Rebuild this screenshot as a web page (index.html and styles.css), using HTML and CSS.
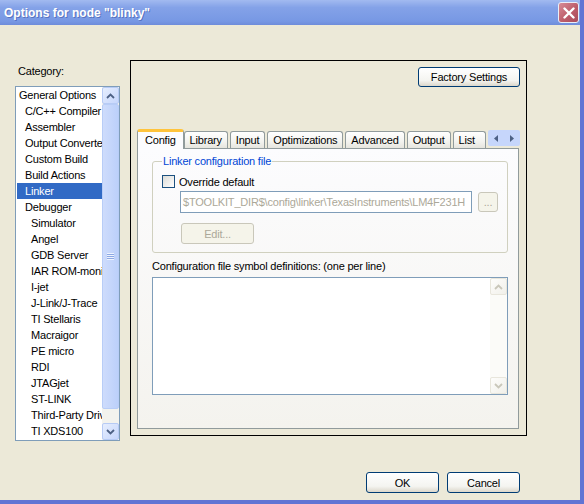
FILE: index.html
```html
<!DOCTYPE html>
<html lang="en">
<head>
    <meta charset="UTF-8">
    <title>Options for node "blinky"</title>
    <link rel="stylesheet" href="styles.css">
</head>
<body>
    <div class="window">
        <div class="titlebar">
            <span class="title">Options for node "blinky"</span>
            <span class="close-btn">
                <svg width="12" height="12" viewBox="0 0 12 12"><path d="M1.5 1.5 L10.5 10.5 M10.5 1.5 L1.5 10.5" stroke="#fff" stroke-width="2.4" stroke-linecap="round"/></svg>
            </span>
        </div>

        <div class="client">
            <div class="main">
                <div class="sidebar">
                    <div class="cat-label">Category:</div>
                    <div class="listbox">
                        <ul class="cat-list">
                            <li>General Options</li>
                            <li class="lvl1">C/C++ Compiler</li>
                            <li class="lvl1">Assembler</li>
                            <li class="lvl1">Output Converter</li>
                            <li class="lvl1">Custom Build</li>
                            <li class="lvl1">Build Actions</li>
                            <li class="lvl1 selected">Linker</li>
                            <li class="lvl1">Debugger</li>
                            <li class="lvl2">Simulator</li>
                            <li class="lvl2">Angel</li>
                            <li class="lvl2">GDB Server</li>
                            <li class="lvl2">IAR ROM-monitor</li>
                            <li class="lvl2">I-jet</li>
                            <li class="lvl2">J-Link/J-Trace</li>
                            <li class="lvl2">TI Stellaris</li>
                            <li class="lvl2">Macraigor</li>
                            <li class="lvl2">PE micro</li>
                            <li class="lvl2">RDI</li>
                            <li class="lvl2">JTAGjet</li>
                            <li class="lvl2">ST-LINK</li>
                            <li class="lvl2">Third-Party Driver</li>
                            <li class="lvl2">TI XDS100</li>
                        </ul>
                        <div class="vscroll">
                            <span class="sb-btn">
                                <svg width="9" height="6" viewBox="0 0 9 6"><path d="M1 5 L4.5 1.5 L8 5" fill="none" stroke="#4D6185" stroke-width="1.8"/></svg>
                            </span>
                            <span class="sb-thumb"><span class="grip"></span></span>
                            <span class="sb-track"></span>
                            <span class="sb-btn">
                                <svg width="9" height="6" viewBox="0 0 9 6"><path d="M1 1 L4.5 4.5 L8 1" fill="none" stroke="#4D6185" stroke-width="1.8"/></svg>
                            </span>
                        </div>
                    </div>
                </div>

                <div class="panel">
                    <div class="panel-top">
                        <button class="xp-btn factory-btn">Factory Settings</button>
                    </div>

                    <div class="tabs">
                        <span class="tab active">Config</span>
                        <span class="tab">Library</span>
                        <span class="tab">Input</span>
                        <span class="tab">Optimizations</span>
                        <span class="tab">Advanced</span>
                        <span class="tab">Output</span>
                        <span class="tab tab-last">List</span>
                        <span class="tab-arrows">
                            <span class="tab-arrow"><svg width="4" height="7" viewBox="0 0 4 7"><path d="M4 0 L0 3.5 L4 7 Z" fill="#4D6185"/></svg></span>
                            <span class="tab-arrow"><svg width="4" height="7" viewBox="0 0 4 7"><path d="M0 0 L4 3.5 L0 7 Z" fill="#4D6185"/></svg></span>
                        </span>
                    </div>

                    <div class="tab-page">
                        <fieldset class="group">
                            <legend>Linker configuration file</legend>
                            <div class="check-row">
                                <span class="checkbox"></span>
                                <span>Override default</span>
                            </div>
                            <div class="path-row">
                                <span class="textbox disabled">$TOOLKIT_DIR$\config\linker\TexasInstruments\LM4F231H</span>
                                <button class="xp-btn disabled browse-btn">...</button>
                            </div>
                            <div class="edit-row">
                                <button class="xp-btn disabled edit-btn">Edit...</button>
                            </div>
                        </fieldset>

                        <div class="defs-label">Configuration file symbol definitions: (one per line)</div>
                        <div class="defs-box">
                            <div class="defs-text"></div>
                            <div class="vscroll off">
                                <span class="sb-btn">
                                    <svg width="9" height="6" viewBox="0 0 9 6"><path d="M1 5 L4.5 1.5 L8 5" fill="none" stroke="#C9C7BA" stroke-width="1.8"/></svg>
                                </span>
                                <span class="sb-track"></span>
                                <span class="sb-btn">
                                    <svg width="9" height="6" viewBox="0 0 9 6"><path d="M1 1 L4.5 4.5 L8 1" fill="none" stroke="#C9C7BA" stroke-width="1.8"/></svg>
                                </span>
                            </div>
                        </div>
                    </div>
                </div>
            </div>

            <div class="footer">
                <button class="xp-btn dlg-btn">OK</button>
                <button class="xp-btn dlg-btn">Cancel</button>
            </div>
        </div>
    </div>
</body>
</html>
```

FILE: styles.css
```css
body {
    margin: 0;
    background-color: #ECE9D8;
    font-family: 'Liberation Sans', Arial, sans-serif;
    font-size: 11px;
    letter-spacing: -0.2px;
    color: #000;
}

.window {
    width: 584px;
    height: 504px;
    box-sizing: border-box;
    display: flex;
    flex-direction: column;
    background-color: #ECE9D8;
    border-right: 4px solid #6174D4;
    border-bottom: 4px solid #6174D4;
}

/* title bar */
.titlebar {
    height: 25px;
    flex: none;
    display: flex;
    align-items: center;
    justify-content: space-between;
    padding: 0 1px 0 4px;
    background: linear-gradient(#A2BAF0, #84A2E8 30%, #7798E4 85%, #6E8CDA);
}

.title {
    color: #fff;
    font-weight: bold;
    font-size: 12px;
    letter-spacing: 0;
    text-shadow: 1px 1px 0 rgba(30, 50, 130, 0.4);
}

.close-btn {
    width: 21px;
    height: 21px;
    box-sizing: border-box;
    border: 1px solid #E9EEF8;
    border-radius: 3px;
    background: linear-gradient(135deg, #D88C96, #BB5A68 60%, #A84C5B);
    display: flex;
    align-items: center;
    justify-content: center;
}

/* client area */
.client {
    flex: 1;
    display: flex;
    flex-direction: column;
    padding: 35px 0 0 15px;
}

.main {
    display: flex;
    gap: 10px;
}

.sidebar {
    width: 105px;
    padding-top: 5px;
}

.cat-label {
    line-height: 13px;
    margin-bottom: 8px;
    padding-left: 3px;
}

.listbox {
    height: 355px;
    box-sizing: border-box;
    border: 1px solid #7F9DB9;
    background-color: #fff;
    display: flex;
}

.cat-list {
    list-style: none;
    margin: 0;
    padding: 0;
    width: 86px;
    overflow: hidden;
}

.cat-list li {
    height: 16px;
    line-height: 16px;
    padding-left: 3px;
    white-space: nowrap;
}

.cat-list li.lvl1 {
    padding-left: 9px;
}

.cat-list li.lvl2 {
    padding-left: 15px;
}

.cat-list li.selected {
    background-color: #316AC5;
    color: #fff;
    margin-left: 1px;
    padding-left: 8px;
}

/* scrollbars */
.vscroll {
    width: 17px;
    flex: none;
    display: flex;
    flex-direction: column;
    background-color: #F3F3EE;
}

.sb-btn {
    height: 17px;
    box-sizing: border-box;
    border: 1px solid #B7CBF5;
    border-radius: 2px;
    background: linear-gradient(135deg, #E6EEFE, #C6D6FC);
    display: flex;
    align-items: center;
    justify-content: center;
    flex: none;
}

.sb-thumb {
    height: 305px;
    box-sizing: border-box;
    border: 1px solid #B8CDF7;
    border-radius: 2px;
    background: linear-gradient(90deg, #CEDCFC, #BCD0FA);
    display: flex;
    align-items: center;
    justify-content: center;
    flex: none;
}

.grip {
    width: 7px;
    height: 7px;
    background: repeating-linear-gradient(#EEF3FE 0 1px, #8CA8E4 1px 2px);
}

.sb-track {
    flex: 1;
}

.vscroll.off {
    background-color: #FBFBF8;
}

.vscroll.off .sb-btn {
    border-color: #E8E6DC;
    background: linear-gradient(135deg, #FDFDFB, #F1F0EA);
}

/* options panel */
.panel {
    width: 397px;
    height: 376px;
    box-sizing: border-box;
    border: 1px solid #000;
    padding: 6px 7px 6px 6px;
    display: flex;
    flex-direction: column;
}

.panel-top {
    display: flex;
    justify-content: flex-end;
}

.xp-btn {
    box-sizing: border-box;
    height: 21px;
    border: 1px solid #003C74;
    border-radius: 3px;
    background: linear-gradient(#FFFFFF, #F4F4F0 70%, #DCD7CB);
    font: inherit;
    letter-spacing: inherit;
    color: #000;
    padding: 0;
}

.xp-btn.disabled {
    border-color: #C9C7BA;
    background: #F5F4EA;
    color: #ACA899;
}

.factory-btn {
    width: 102px;
    height: 20px;
    margin-right: -1px;
}

/* tabs */
.tabs {
    display: flex;
    align-items: flex-end;
    height: 19px;
    margin-top: 42px;
    position: relative;
    z-index: 1;
}

.tab {
    box-sizing: border-box;
    height: 17px;
    line-height: 16px;
    padding: 0 5px;
    margin-right: 2px;
    border: 1px solid #919B9C;
    border-bottom: none;
    border-radius: 3px 3px 0 0;
    background: linear-gradient(#FFFFFF, #F3F3EF 60%, #E6E5DE);
    white-space: nowrap;
}

.tab.active {
    height: 20px;
    margin-bottom: -1px;
    margin-right: 0;
    padding: 0 7px;
    border-top: 3px solid #FFC43C;
    background: #FCFCFE;
    line-height: 16px;
}

.tab-last {
    width: 41px;
}

.tab-arrows {
    margin-left: auto;
    margin-right: -1px;
    margin-bottom: 2px;
    display: flex;
    flex: none;
    background-color: #C6D6FB;
    border-radius: 2px;
}

.tab-arrow {
    width: 16px;
    height: 16px;
    display: flex;
    align-items: center;
    justify-content: center;
}

.tab-page {
    flex: 1;
    box-sizing: border-box;
    border: 1px solid #919B9C;
    background: linear-gradient(#FCFCFE, #F4F3EE);
    padding: 6px 10px 0 14px;
}

/* group box */
.group {
    margin: 0;
    padding: 0 9px 8px 9px;
    border: 1px solid #D0D0BF;
    border-radius: 3px;
    min-width: 0;
}

.group legend {
    padding: 0 1px;
    line-height: 13px;
    color: #0046D5;
}

.check-row {
    display: flex;
    align-items: center;
    height: 13px;
    margin-top: 7px;
}

.checkbox {
    width: 13px;
    height: 13px;
    box-sizing: border-box;
    border: 1px solid #1C5180;
    background: linear-gradient(135deg, #DCDCD7, #FFFFFF);
    margin-right: 4px;
}

.path-row {
    display: flex;
    align-items: center;
    margin-top: 3px;
    padding-left: 18px;
}

.textbox {
    width: 293px;
    height: 22px;
    box-sizing: border-box;
    border: 1px solid #7F9DB9;
    background-color: #fff;
    line-height: 20px;
    padding-left: 2px;
    white-space: nowrap;
    overflow: hidden;
}

.textbox.disabled {
    color: #ACA899;
}

.browse-btn {
    width: 20px;
    height: 20px;
    margin-left: 6px;
    line-height: 14px;
}

.edit-row {
    margin-top: 10px;
    padding-left: 19px;
}

.edit-btn {
    width: 73px;
    display: block;
}

.defs-label {
    line-height: 13px;
    margin-top: 7px;
}

.defs-box {
    height: 118px;
    margin-top: 4px;
    box-sizing: border-box;
    border: 1px solid #7F9DB9;
    background-color: #fff;
    display: flex;
}

.defs-text {
    flex: 1;
}

/* dialog buttons */
.footer {
    display: flex;
    justify-content: flex-end;
    gap: 8px;
    margin-top: 31px;
    padding-right: 60px;
}

.dlg-btn {
    width: 73px;
}
```
